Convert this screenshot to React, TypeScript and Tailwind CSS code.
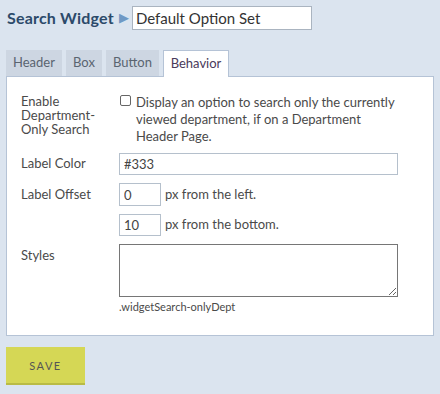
import React from "react";

const Tab = ({ label, width, active }: { label: string; width: string; active?: boolean }) => (
  <div
    className={`${width} flex items-center justify-center text-[13px] ${
      active
        ? "bg-white text-[#4a3a5a] border border-b-0 border-[#b5c3d6] h-[27px] -mb-px relative z-10"
        : "h-[26px] bg-[#cdd6e2] text-[#5a6470]"
    }`}
  >
    {label}
  </div>
);

export default function App() {
  return (
    <div
      className="w-[440px] h-[394px] bg-[#dbe4ef] text-[#4a4a4a] overflow-hidden"
      style={{ fontFamily: "Lato, 'Open Sans', sans-serif" }}
    >
      <div className="flex items-center pt-[6px] pl-[7px]">
        <span className="text-[16px] font-bold text-[#2c4a6a] tracking-[0.2px]">Search Widget</span>
        <span className="text-[#6f99c5] text-[13px] ml-[5px] mr-[3px]">▶</span>
        <input
          className="w-[180px] h-[24px] border border-[#aab4c0] bg-white px-[3px] text-[15px] text-[#333] outline-none"
          defaultValue="Default Option Set"
        />
      </div>

      <div className="flex gap-[4px] pl-[6px] mt-[20px] items-end">
        <Tab label="Header" width="w-[56px]" />
        <Tab label="Box" width="w-[36px]" />
        <Tab label="Button" width="w-[53px]" />
        <Tab label="Behavior" width="w-[66px]" active />
      </div>

      <div className="mx-[6px] h-[260px] bg-white border border-[#b5c3d6] pl-[14px] pt-[17px] text-[13px]">
        <div className="flex">
          <div className="w-[98px] pr-[12px] leading-[14px]">Enable Department-Only Search</div>
          <div className="flex w-[279px] leading-[17px]">
            <div className="w-[11px] h-[11px] mt-[1px] ml-px mr-[5px] shrink-0 border border-[#666] rounded-[2px] bg-white" />
            <div>Display an option to search only the currently viewed department, if on a Department Header Page.</div>
          </div>
        </div>

        <div className="flex items-center mt-[8px]">
          <div className="w-[98px]">Label Color</div>
          <input
            className="w-[279px] h-[22px] border border-[#b5c0cc] px-[4px] text-[13px] text-[#444] outline-none"
            defaultValue="#333"
          />
        </div>

        <div className="flex items-center mt-[8px]">
          <div className="w-[98px]">Label Offset</div>
          <input
            className="w-[42px] h-[23px] border border-[#b5c0cc] px-[4px] text-[13px] text-[#444] outline-none"
            defaultValue="0"
          />
          <span className="ml-[4px]">px from the left.</span>
        </div>

        <div className="flex items-center mt-[8px]">
          <div className="w-[98px]" />
          <input
            className="w-[42px] h-[22px] border border-[#b5c0cc] px-[4px] text-[13px] text-[#444] outline-none"
            defaultValue="10"
          />
          <span className="ml-[4px]">px from the bottom.</span>
        </div>

        <div className="flex mt-[8px]">
          <div className="w-[98px] pt-[2px]">Styles</div>
          <div className="flex flex-col">
            <textarea className="w-[279px] h-[53px] border border-[#767676] outline-none block" />
            <div className="text-[11px] mt-[2px]">.widgetSearch-onlyDept</div>
          </div>
        </div>
      </div>

      <button className="ml-[6px] mt-[11px] w-[79px] h-[38px] bg-[#d5d755] border-b-2 border-[#b9bb45] text-[11px] tracking-[1.5px] text-[#555] pt-[2px]">
        SAVE
      </button>
    </div>
  );
}
